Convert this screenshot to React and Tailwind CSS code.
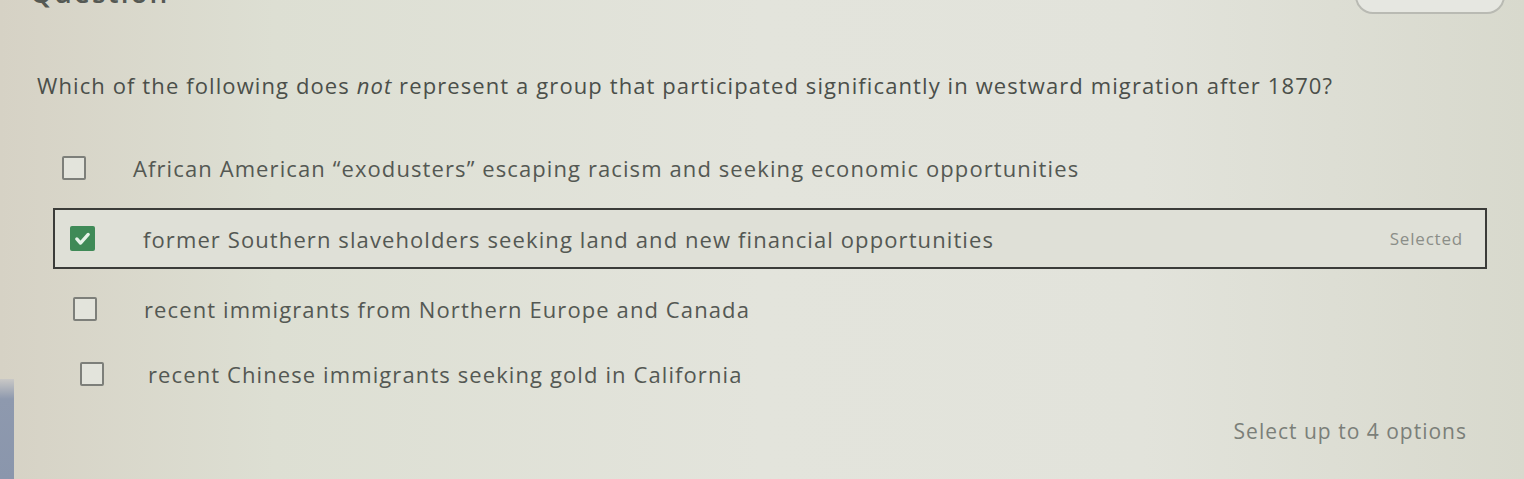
import React from 'react';

const options = [
  { id: 1, label: 'African American \u201Cexodusters\u201D escaping racism and seeking economic opportunities', pad: 'pl-[7px]', gap: 'gap-[47px]' },
  { id: 2, label: 'former Southern slaveholders seeking land and new financial opportunities', pad: 'pl-[15px]', gap: 'gap-[48px]', selected: true },
  { id: 3, label: 'recent immigrants from Northern Europe and Canada', pad: 'pl-[18px]', gap: 'gap-[47px]' },
  { id: 4, label: 'recent Chinese immigrants seeking gold in California', pad: 'pl-[25px]', gap: 'gap-[44px]' },
];

function Checkbox({ checked }) {
  if (checked) {
    return (
      <span className="flex h-[25px] w-[25px] shrink-0 items-center justify-center rounded-[2px] bg-[#3f8a57]">
        <svg width="19" height="19" viewBox="0 0 16 16" fill="none">
          <path d="M3.2 8.4l3.1 3.4L12.8 4.6" stroke="#e6f2e8" strokeWidth="2.8" strokeLinecap="round" strokeLinejoin="round" />
        </svg>
      </span>
    );
  }
  return <span className="h-6 w-6 shrink-0 rounded-[2px] border-2 border-[#7d7f7a] bg-[#e3e4dc]" />;
}

function OptionRow({ option }) {
  const box = option.selected
    ? 'h-[61px] border-2 border-[#3b3c39] bg-[#dfe0d7]'
    : 'h-[50px] border-2 border-transparent';
  return (
    <div className={`ml-[53px] flex w-[1434px] items-center pr-[22px] ${box} ${option.pad}`}>
      <div className={`flex flex-1 items-center ${option.gap}`}>
        <Checkbox checked={option.selected} />
        <span className="text-[22px] leading-7 tracking-[1.1px] text-[#545853]">{option.label}</span>
      </div>
      {option.selected && <span className="text-[17px] tracking-[0.8px] text-[#8b8e88]">Selected</span>}
    </div>
  );
}

export default function App() {
  return (
    <div
      className="relative h-[479px] w-[1524px] overflow-hidden bg-[linear-gradient(90deg,#d6d2c5_0%,#dddfd3_18%,#e3e4dc_50%,#e2e3db_75%,#d8d9cd_100%)]"
      style={{ fontFamily: '"Open Sans", "Liberation Sans", sans-serif' }}
    >
      <div className="-mt-[24px] flex items-start justify-between pl-[30px] pr-[19px]">
        <span className="text-[28px] font-semibold leading-[32px] tracking-[2px] text-[#555954]">Question</span>
        <span className="mt-[2px] h-[36px] w-[150px] rounded-[18px] border-2 border-[#b9bab3] bg-[#e6e7e1]" />
      </div>

      <p className="mt-[57px] pl-[37px] text-[22px] leading-7 tracking-[1.1px] text-[#4b4f4a]">
        Which of the following does <em>not</em> represent a group that participated significantly in westward migration after 1870?
      </p>

      <div className="mt-[44px] flex flex-col gap-[15px]">
        {options.map(o => (
          <OptionRow key={o.id} option={o} />
        ))}
      </div>

      <div className="mt-[19px] flex justify-end pr-[57px]">
        <span className="text-[21px] leading-[26px] tracking-[1px] text-[#7b7f79]">Select up to 4 options</span>
      </div>

      {/* monitor bezel peeking in at the lower left */}
      <div className="absolute bottom-0 left-0 h-[100px] w-[14px] bg-[linear-gradient(180deg,#c9c8c6_0%,#8e99ae_20%,#8a96ac_100%)]" />
    </div>
  );
}
